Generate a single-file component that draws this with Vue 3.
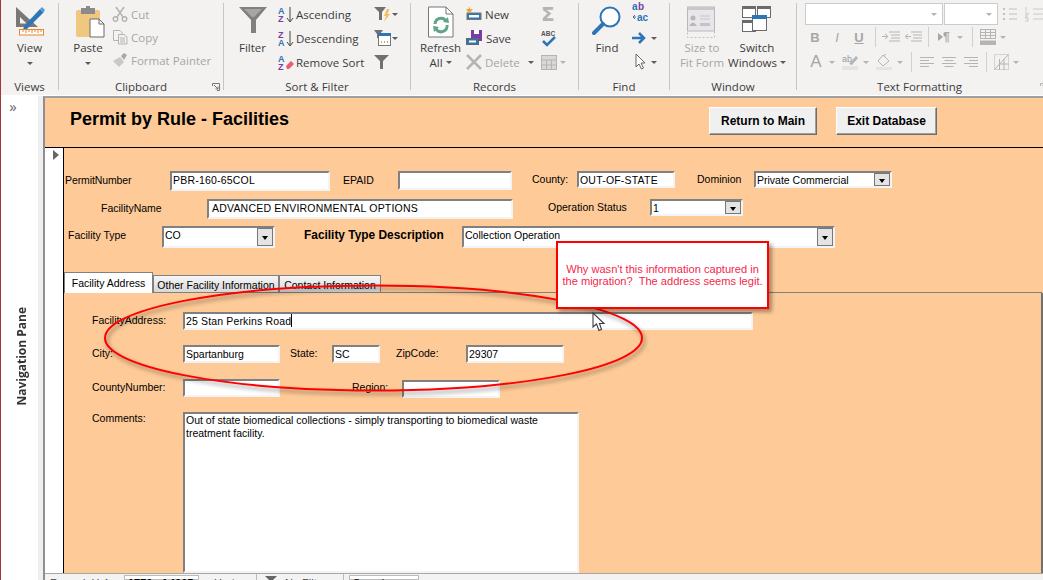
<template>
  <div class="app">
    <!-- ribbon -->
    <div class="ribbon">
      <div class="group g-views">
        <div class="group-body">
          <div class="big">
            <svg class="big-icon" width="32" height="32" viewBox="0 0 32 32">
              <path d="M2 1 L2 21 L24 21 Z" fill="#787878" />
              <path d="M6 11 L6 17.500 L12.500 17.500 Z" fill="#f3f2f1" />
              <path d="M10 20 L26 3 L29.500 6.500 L13 23 L9 24 Z" fill="#2e75b6" />
              <path d="M26 3 L28 1 L31 4 L29.500 6.500 Z" fill="#5b9bd5" />
              <rect x="5.500" y="23.500" width="24" height="5.500" fill="#fff" stroke="#e8862a" />
              <path d="M9 24v2M12 24v3M15 24v2M18 24v3M21 24v2M24 24v3M27 24v2" stroke="#e8862a" />
            </svg>
            <span>View</span>
            <i class="caret" />
          </div>
        </div>
        <div class="group-label">Views</div>
      </div>

      <div class="group g-clip">
        <div class="group-body">
          <div class="big paste">
            <svg class="big-icon" width="30" height="32" viewBox="0 0 30 32">
              <rect x="1" y="4" width="24" height="27" rx="2" fill="#f0c77e" />
              <rect x="6" y="2" width="14" height="6" fill="#8a8a8a" />
              <rect x="11" y="0" width="4" height="4" fill="#8a8a8a" />
              <path d="M15 13 H24 L29 18 V31 H15 Z" fill="#fff" stroke="#6b6b6b" />
              <path d="M24 13 V18 H29" fill="none" stroke="#6b6b6b" />
            </svg>
            <span>Paste</span>
            <i class="caret" />
          </div>
          <div class="small-col col-clip">
            <div class="small off">
              <svg width="16" height="16" viewBox="0 0 16 16" fill="none" stroke="#b4b4b4" stroke-width="1.500"><path d="M4 1 L11 11M12 1 L5 11" /><circle cx="3.500" cy="13" r="2.300" /><circle cx="12.500" cy="13" r="2.300" /></svg>
              <span>Cut</span>
            </div>
            <div class="small off">
              <svg width="16" height="16" viewBox="0 0 16 16" fill="#f3f2f1" stroke="#b4b4b4"><path d="M1.500 1.500 H8 L10 3.500 V11.500 H1.500 Z" /><path d="M6.500 5.500 H12 L15 8 V15 H6.500 Z" /><path d="M8 9h5M8 11h5M8 13h5" /></svg>
              <span>Copy</span>
            </div>
            <div class="small off">
              <svg width="16" height="16" viewBox="0 0 16 16"><path d="M1 9 L8 5 L12 10 L7 15 Z" fill="#c8c8c8" /><path d="M9 4 L12 1 L15 3 L12 8 Z" fill="#a8a8a8" /></svg>
              <span>Format Painter</span>
            </div>
          </div>
        </div>
        <div class="group-label">Clipboard</div>
        <svg class="launcher" width="8" height="8" viewBox="0 0 8 8" fill="none" stroke="#777"><path d="M.5 3V.5H7.500V7.500H5" /><path d="M2 2 L6 6M6 3.500V6H3.500" /></svg>
      </div>

      <div class="group g-sort">
        <div class="group-body">
          <div class="big filter">
            <svg class="big-icon" width="30" height="32" viewBox="0 0 30 32">
              <path d="M1 1 H29 L18 14 V27 H13 V14 Z" fill="#808080" />
              <path d="M6 3 H24 L16 11 H14 Z" fill="#a6a6a6" />
            </svg>
            <span>Filter</span>
          </div>
          <div class="small-col col-sort">
            <div class="small">
              <svg width="16" height="17" viewBox="0 0 16 17">
                <text x="0" y="7.500" class="az blue">A</text><text x="0" y="16" class="az violet">Z</text>
                <path d="M12 1 V15 M9 12 L12 16 L15 12" fill="none" stroke="#444" />
              </svg>
              <span>Ascending</span>
            </div>
            <div class="small">
              <svg width="16" height="17" viewBox="0 0 16 17">
                <text x="0" y="7.500" class="az violet">Z</text><text x="0" y="16" class="az blue">A</text>
                <path d="M12 1 V15 M9 12 L12 16 L15 12" fill="none" stroke="#444" />
              </svg>
              <span>Descending</span>
            </div>
            <div class="small">
              <svg width="16" height="17" viewBox="0 0 16 17">
                <text x="0" y="7.500" class="az blue">A</text><text x="0" y="16" class="az violet">Z</text>
                <path d="M8 12 L13 7 L16 10 L11 15 H9 Z" fill="#e85d75" />
              </svg>
              <span>Remove Sort</span>
            </div>
          </div>
          <div class="small-col col-filter">
            <div class="icon-row">
              <svg width="18" height="16" viewBox="0 0 18 16"><path d="M0 1 H12 L8 6 V14 H5 V6 Z" fill="#707070" /><path d="M13 3 L10 10 H12 L10 16 L16 8 H13.500 L15.500 3 Z" fill="#f0c060" /></svg>
              <i class="caret" />
            </div>
            <div class="icon-row">
              <svg width="18" height="18" viewBox="0 0 18 18"><path d="M0 1 H9 L6 5 V9 H3 V5 Z" fill="#707070" /><rect x="4.500" y="4.500" width="12" height="12" fill="#fff" stroke="#777" /><rect x="4" y="4" width="13" height="3" fill="#2e75b6" /><path d="M7 13h1M10 13h1M13 13h1" stroke="#555" /></svg>
              <i class="caret" />
            </div>
            <div class="icon-row">
              <svg width="15" height="14" viewBox="0 0 15 14"><path d="M0 0 H15 L9 6 V14 H6 V6 Z" fill="#707070" /></svg>
            </div>
          </div>
        </div>
        <div class="group-label">Sort &amp; Filter</div>
      </div>

      <div class="group g-rec">
        <div class="group-body">
          <div class="big refresh">
            <svg class="big-icon" width="26" height="32" viewBox="0 0 26 32">
              <path d="M.5 1 H18 L25 8 V31 H.5 Z" fill="#fff" stroke="#777" />
              <path d="M18 1 V8 H25" fill="none" stroke="#777" />
              <path d="M7 18 A6 6 0 0 1 18 15" fill="none" stroke="#5fa58a" stroke-width="3" />
              <path d="M19 19 A6 6 0 0 1 8 23" fill="none" stroke="#5fa58a" stroke-width="3" />
              <path d="M15 16 L21 17 L20 11 Z M11 21 L5 20 L6 26 Z" fill="#5fa58a" />
            </svg>
            <span>Refresh</span>
            <span>All<i class="caret inline" /></span>
          </div>
          <div class="small-col col-rec">
            <div class="small">
              <svg width="16" height="16" viewBox="0 0 16 16"><rect x="1" y="7" width="14" height="6.500" fill="#2e75b6" stroke="#777" /><rect x="3" y="9" width="10" height="2.500" fill="#fff" /><path d="M3 0 L4 3 L7 3 L5 5 L6 7 L3 6 L1 7 L1.500 5 L0 3 L2.500 3 Z" fill="#eaa83a" /></svg>
              <span>New</span>
            </div>
            <div class="small">
              <svg width="17" height="16" viewBox="0 0 17 16"><rect x="5" y="0" width="11" height="11" fill="#7a3ea0" /><rect x="8" y="0" width="5" height="4" fill="#fff" /><rect x=".5" y="8.500" width="12" height="6" fill="#2e75b6" stroke="#666" /><rect x="3" y="10.500" width="7" height="2" fill="#fff" /></svg>
              <span>Save</span>
            </div>
            <div class="small off">
              <svg width="16" height="16" viewBox="0 0 16 16" stroke="#b4b4b4" stroke-width="2.500"><path d="M1 1 L15 15M15 1 L1 15" /></svg>
              <span>Delete</span>
              <i class="caret del" />
            </div>
          </div>
          <div class="small-col col-rec2">
            <div class="icon-row">
              <span class="sigma">Σ</span>
            </div>
            <div class="icon-row">
              <svg width="16" height="18" viewBox="0 0 16 18"><text x="0" y="6.500" class="abc">ABC</text><path d="M2 12 L6 16 L14 8" fill="none" stroke="#2e75b6" stroke-width="2.500" /></svg>
            </div>
            <div class="icon-row gap3">
              <svg width="16" height="15" viewBox="0 0 16 15" fill="#d8d8d8" stroke="#b4b4b4"><rect x=".5" y=".5" width="15" height="14" /><path d="M.5 5h15M.5 10h15M5.500 5v10M10.500 5v10" /></svg>
              <i class="caret pale" />
            </div>
          </div>
        </div>
        <div class="group-label">Records</div>
      </div>

      <div class="group g-find">
        <div class="group-body">
          <div class="big find">
            <svg class="big-icon" width="30" height="32" viewBox="0 0 30 32">
              <circle cx="18" cy="11" r="9.500" fill="#fff" stroke="#2e75b6" stroke-width="2" />
              <path d="M11 18 L2 27" stroke="#2e75b6" stroke-width="4" stroke-linecap="round" />
            </svg>
            <span>Find</span>
          </div>
          <div class="small-col col-find">
            <div class="icon-row spread">
              <svg class="find-ab" width="18" height="23" viewBox="0 0 18 23"><text x="0" y="10" class="ab-a">a</text><text x="6" y="10" class="ab-b">b</text><text x="5" y="21" class="ab-c">ac</text><path d="M1 17 H4 M1 17 L3 15 M1 17 L3 19" fill="none" stroke="#2e75b6" /></svg>
            </div>
            <div class="icon-row spread">
              <svg width="14" height="12" viewBox="0 0 14 12"><path d="M0 6 H11 M7 1 L12 6 L7 11" fill="none" stroke="#2e75b6" stroke-width="2.500" /></svg>
              <i class="caret" />
            </div>
            <div class="icon-row spread">
              <svg class="find-ptr" width="14" height="18" viewBox="0 0 14 18"><path d="M2 1 V14 L5 11 L7.500 16 L9.500 15 L7 10 H11 Z" fill="#fff" stroke="#666" /></svg>
              <i class="caret" />
            </div>
          </div>
        </div>
        <div class="group-label">Find</div>
      </div>

      <div class="group g-win">
        <div class="group-body">
          <div class="big size off">
            <svg class="big-icon" width="30" height="32" viewBox="0 0 30 32">
              <rect x=".5" y="20.500" width="27" height="11" fill="none" stroke="#c0bcc8" stroke-dasharray="2 2" />
              <rect x=".5" y="1" width="27" height="24" fill="#e8e6ea" stroke="#b8b8b8" />
              <rect x=".5" y="1" width="27" height="3" fill="#c8c8c8" />
              <circle cx="6" cy="12" r="2.500" fill="#b8b8b8" />
              <path d="M2 20 Q6 13 10 20 Z" fill="#b8b8b8" />
              <path d="M13 10h10M13 13h10" stroke="#c4c4c4" />
              <rect x="13" y="17" width="10" height="3" fill="#c4c4c4" />
            </svg>
            <span>Size to</span>
            <span>Fit Form</span>
          </div>
          <div class="big switch">
            <svg class="big-icon" width="30" height="32" viewBox="0 0 30 32">
              <g fill="#fff" stroke="#6b6b6b">
                <rect x=".5" y=".5" width="13" height="11" />
                <rect x="15.500" y=".5" width="13" height="11" />
                <rect x=".5" y="14.500" width="13" height="11" />
              </g>
              <g fill="#6b6b6b">
                <rect x="0" y="0" width="14" height="3" />
                <rect x="15" y="0" width="14" height="3" />
                <rect x="0" y="14" width="14" height="3" />
              </g>
              <rect x="10.500" y="9.500" width="14" height="15" fill="#fff" stroke="#6b6b6b" />
              <rect x="10" y="9" width="15" height="4" fill="#2e75b6" />
            </svg>
            <span>Switch</span>
            <span>Windows<i class="caret inline" /></span>
          </div>
        </div>
        <div class="group-label">Window</div>
      </div>

      <div class="group g-text">
        <div class="group-body text-body">
          <div class="fmt-row fmt-top">
            <div class="font-box font-name"><i class="caret pale" /></div>
            <div class="font-box font-size"><i class="caret pale" /></div>
            <svg width="14" height="16" viewBox="0 0 14 16" stroke="#c0c0c0"><path d="M6 3h8M6 8h8M6 13h8" /><path d="M0 3h3M0 8h3M0 13h3" stroke-width="2" stroke-dasharray="2 1" /></svg>
            <svg class="num-list" width="18" height="16" viewBox="0 0 18 16" stroke="#c0c0c0"><path d="M8 3h10M8 8h10M8 13h10M1 1v4M0 7h3v2h-3v2h3M0 12h3v3h-3" fill="none" stroke-width=".8" /></svg>
          </div>
          <div class="fmt-row fmt-two">
            <span class="fmt b">B</span>
            <span class="fmt i">I</span>
            <span class="fmt u">U</span>
            <i class="vsep s1" />
            <svg class="in-a" width="18" height="12" viewBox="0 0 18 12" stroke="#b4b4b4"><path d="M7 1h11M9 4h9M9 7h9M7 10h11" /><path d="M0 5.500h5M3 3l3 2.500-3 2.500" fill="none" /></svg>
            <svg class="in-b" width="17" height="12" viewBox="0 0 17 12" stroke="#b4b4b4"><path d="M6 1h11M8 4h9M8 7h9M6 10h11" /><path d="M6 5.500H1M3 3L0 5.500 3 8" fill="none" /></svg>
            <i class="vsep s2" />
            <span class="pilcrow"><i class="tri" />¶</span>
            <i class="caret pale c1" />
            <i class="vsep s3" />
            <svg width="16" height="16" viewBox="0 0 16 16" fill="none" stroke="#b4b4b4"><rect x=".5" y=".5" width="15" height="9" /><path d="M.5 3.500h15M.5 6.500h15M5.500 .5v9M10.500 .5v9" /><rect x="0" y="12" width="16" height="4" fill="#b4b4b4" /></svg>
            <i class="caret pale c2" />
          </div>
          <div class="fmt-row fmt-three">
            <span class="fmt big-a">A</span>
            <i class="caret pale c3" />
            <svg class="hl" width="17" height="16" viewBox="0 0 17 16"><text x="0" y="8" class="abh">ab</text><path d="M7 10 L14 2 L16 4 L10 11 Z" fill="#b4b4b4" /><rect x="0" y="12" width="16" height="4" fill="#e4e4e4" /></svg>
            <i class="caret pale c4" />
            <svg class="fill" width="16" height="16" viewBox="0 0 16 16"><path d="M7 1 L13 7 L7 12 L2 7 Z" fill="none" stroke="#b4b4b4" /><path d="M7 2 L10 0" stroke="#b4b4b4" /><rect x="0" y="13" width="16" height="3" fill="#e4e4e4" /></svg>
            <i class="caret pale c5" />
            <i class="vsep s4" />
            <svg class="al" width="14" height="11" viewBox="0 0 14 11" stroke="#b4b4b4"><path d="M0 .5h14M0 3.500h9M0 6.500h14M0 9.500h9" /></svg>
            <svg class="al" width="14" height="11" viewBox="0 0 14 11" stroke="#b4b4b4"><path d="M0 .5h14M2.500 3.500h9M0 6.500h14M2.500 9.500h9" /></svg>
            <svg class="al" width="14" height="11" viewBox="0 0 14 11" stroke="#b4b4b4"><path d="M0 .5h14M5 3.500h9M0 6.500h14M5 9.500h9" /></svg>
            <i class="vsep s5" />
            <svg width="15" height="16" viewBox="0 0 15 16" fill="none" stroke="#b4b4b4"><rect x=".5" y=".5" width="14" height="15" stroke-dasharray="1 1" /><path d="M.5 15.500 L14.500 .5M5.500 5v11M10 5v11M5 10h10" /></svg>
            <i class="caret pale c6" />
          </div>
        </div>
        <div class="group-label">Text Formatting</div>
        <svg class="launcher" width="8" height="8" viewBox="0 0 8 8" fill="none" stroke="#b4b4b4"><path d="M.5 3V.5H7.500V7.500H5" /><path d="M2 2 L6 6M6 3.500V6H3.500" /></svg>
      </div>
    </div>

    <!-- work area -->
    <div class="work">
      <div class="nav-pane">
        <span class="chev">»</span>
        <span class="nav-title">Navigation Pane</span>
      </div>

      <div class="form-wrap">
        <div class="form-head">
          <h1>Permit by Rule - Facilities</h1>
          <button class="cmd cmd-main">Return to Main</button>
          <button class="cmd cmd-exit">Exit Database</button>
        </div>

        <div class="form-main">
          <div class="selector"><i class="sel-arrow" /></div>
          <div class="detail">
            <div class="row r1">
              <label class="low w-permit">PermitNumber</label>
              <div class="box caps b-permit">PBR-160-65COL</div>
              <label class="low w-epaid">EPAID</label>
              <div class="box b-epaid"></div>
              <label class="w-county">County:</label>
              <div class="box caps b-county">OUT-OF-STATE</div>
              <label class="w-dom">Dominion</label>
              <div class="box combo b-dom">Private Commercial<i class="drop"><b /></i></div>
            </div>
            <div class="row r2">
              <label class="low w-fname">FacilityName</label>
              <div class="box caps b-fname">ADVANCED ENVIRONMENTAL OPTIONS</div>
              <label class="w-op">Operation Status</label>
              <div class="box combo b-op">1<i class="drop"><b /></i></div>
            </div>
            <div class="row r3">
              <label class="low w-type">Facility Type</label>
              <div class="box combo b-type">CO<i class="drop"><b /></i></div>
              <label class="low w-desc">Facility Type Description</label>
              <div class="box combo b-desc">Collection Operation<i class="drop"><b /></i></div>
            </div>

            <div class="tabs">
              <div class="tab on">Facility Address</div>
              <div class="tab t2">Other Facility Information</div>
              <div class="tab t3">Contact Information</div>
              <div class="tab-fill"></div>
            </div>
            <div class="panel">
              <div class="row p1">
                <label class="w-p">FacilityAddress:</label>
                <div class="box b-addr">25 Stan Perkins Road<i class="text-caret" /></div>
              </div>
              <div class="row p2">
                <label class="w-p">City:</label>
                <div class="box b-city">Spartanburg</div>
                <label class="w-state">State:</label>
                <div class="box b-state">SC</div>
                <label class="w-zip">ZipCode:</label>
                <div class="box b-zip">29307</div>
              </div>
              <div class="row p3">
                <label class="w-p">CountyNumber:</label>
                <div class="box b-city"></div>
                <label class="w-region">Region:</label>
                <div class="box b-region"></div>
              </div>
              <div class="row p4">
                <label class="w-p">Comments:</label>
                <div class="box b-comments">Out of state biomedical collections - simply transporting to biomedical waste treatment facility.</div>
              </div>
            </div>
          </div>
        </div>

        <div class="status">
          <span class="st-rec">Record: H 4</span>
          <span class="st-num">1770 of 4905</span>
          <span class="st-nav">▸ H ▸*</span>
          <i class="st-sep" />
          <svg class="st-fun" width="12" height="8" viewBox="0 0 12 8"><path d="M0 0 H12 L8 4 V8 H4 V4 Z" fill="#666" /></svg>
          <span class="st-filter">No Filter</span>
          <i class="st-sep" />
          <span class="st-search">Search</span>
        </div>
      </div>
    </div>

    <!-- markup drawn over the screen -->
    <svg class="ring" width="1043" height="580" viewBox="0 0 1043 580">
      <ellipse cx="373.500" cy="338" rx="268.500" ry="52.500" fill="none" stroke="#f00" stroke-width="2" />
    </svg>
    <div class="note">
      Why wasn't this information captured in<br>the migration?&nbsp; The address seems legit.
    </div>
    <svg class="pointer" width="14" height="21" viewBox="0 0 14 21">
      <path d="M1 1 V15 L4.500 12 L7 18.500 L9.500 17.500 L7.500 11.500 H12 Z" fill="#fff" stroke="#3c3c46" stroke-width="1.100" />
    </svg>
  </div>
</template>

<script setup>
</script>

<style>
html, body { margin: 0; overflow: hidden; background: #fff; }
</style>

<style scoped>
.app {
  position: relative;
  width: 1043px;
  height: 580px;
  overflow: hidden;
  display: flex;
  flex-direction: column;
  box-sizing: border-box;
  border-left: 1px solid #a4373a;
  font-family: "Liberation Sans", Arial, sans-serif;
  background: #fff;
}

/* ribbon */
.ribbon {
  display: flex;
  flex: none;
  height: 95px;
  background: #f3f2f1;
  font-family: "Open Sans", sans-serif;
  font-size: 11.5px;
  color: #3c3c3c;
}
.group {
  position: relative;
  flex: none;
  height: 95px;
  display: flex;
  flex-direction: column;
}
.group::after {
  content: "";
  position: absolute;
  right: 0;
  top: 3px;
  bottom: 5px;
  width: 1px;
  background: #c6c6c6;
}
.g-views { width: 58px; }
.g-clip { width: 165px; }
.g-sort { width: 187px; }
.g-rec { width: 168px; }
.g-find { width: 91px; }
.g-win { width: 127px; }
.g-text { width: 246px; }
.g-text::after { display: none; }
.group-body {
  display: flex;
  height: 80px;
  flex: none;
}
.group-label {
  text-align: center;
  line-height: 14px;
  margin-right: 1px;
}
.launcher {
  position: absolute;
  right: 4px;
  bottom: 4px;
}
.g-text .launcher { right: -5px; }
.big {
  flex: none;
  display: flex;
  flex-direction: column;
  align-items: center;
  line-height: 15px;
  padding-top: 6px;
}
.big-icon { margin-bottom: 2px; flex: none; height: 32px; }
.g-views .big { width: 57px; }
.caret {
  display: block;
  width: 0;
  height: 0;
  margin-top: 7px;
  border-left: 3px solid transparent;
  border-right: 3px solid transparent;
  border-top: 3px solid #5c5c5c;
}
.caret.inline {
  display: inline-block;
  margin: 0 0 2px 3px;
  vertical-align: middle;
}
.caret.pale { border-top-color: #b4b4b4; }
.paste { width: 58px; }
.paste .big-icon { margin-left: 3px; }
.small-col {
  display: flex;
  flex-direction: column;
  flex: none;
  padding-top: 5px;
  gap: 6px;
}
.col-clip { margin-left: -5px; gap: 5px; }
.small {
  display: flex;
  align-items: center;
  gap: 3px;
  height: 18px;
  white-space: nowrap;
}
.small svg { flex: none; }
.off, .off span { color: #a6a6a6; }
.filter { width: 51px; margin-left: 3px; }
.col-sort { width: 96px; }
.col-sort .small { gap: 2px; }
.icon-row {
  display: flex;
  align-items: center;
  height: 18px;
}
.icon-row .caret { margin-top: 0; }
.gap3 { gap: 3px; }
.spread { width: 25px; justify-content: space-between; }
.find-ptr { margin-left: 2px; }
.find-ab { margin-top: -6px; flex: none; }
.az { font: bold 9px "Liberation Sans", sans-serif; }
.blue { fill: #2e75b6; }
.violet { fill: #7a3ea0; }
.refresh { width: 55px; margin-left: 2px; }
.col-rec { width: 75px; margin-left: -2px; }
.caret.del { margin: 0 0 0 5px; }
.sigma {
  color: #b4b4b4;
  font: bold 20px/18px "DejaVu Sans", sans-serif;
}
.abc { font: bold 6.500px "Liberation Sans", sans-serif; fill: #555; }
.find { width: 56px; }
.col-find { margin-left: -3px; }
.ab-a { font: bold 10px "Liberation Sans", sans-serif; fill: #2e75b6; }
.ab-b { font: bold 10px "Liberation Sans", sans-serif; fill: #7a3ea0; }
.ab-c { font: bold 10px "Liberation Sans", sans-serif; fill: #2e75b6; }
.abh { font: 9px "Liberation Sans", sans-serif; fill: #9a9a9a; }
.size { width: 64px; }
.size span { color: #a6a6a6; }
.switch { width: 62px; margin-left: -8px; }

.text-body {
  flex-direction: column;
  box-sizing: border-box;
  padding: 3px 0 0 8px;
}
.fmt-row {
  display: flex;
  align-items: center;
  flex: none;
}
.fmt-top { height: 22px; }
.fmt-two { height: 24px; }
.fmt-three { height: 24px; margin-top: 1px; }
.font-box {
  box-sizing: border-box;
  height: 22px;
  background: #fff;
  border: 1px solid #cbcbcb;
  display: flex;
  align-items: center;
  justify-content: flex-end;
  padding-right: 5px;
  flex: none;
}
.font-box .caret { margin: 0; }
.font-name { width: 138px; margin-right: 1px; }
.font-size { width: 54px; margin-right: 5px; }
.num-list { margin-left: 8px; }
.fmt { color: #a6a6a6; font-family: "Liberation Sans", sans-serif; width: 22px; text-align: center; flex: none; }
.b { font-weight: 700; font-size: 13px; margin-left: -1px; }
.i { font-style: italic; font-size: 13px; }
.u { text-decoration: underline; font-weight: 700; font-size: 13px; }
.vsep {
  flex: none;
  width: 1px;
  height: 20px;
  background: #d0d0d0;
}
.s1 { margin-left: 5px; }
.in-a { margin-left: 6px; }
.in-b { margin-left: 5px; }
.s2 { margin-left: 6px; }
.pilcrow {
  color: #a6a6a6;
  font: bold 12px "Liberation Sans", sans-serif;
  margin-left: 9px;
  display: flex;
  align-items: center;
}
.tri {
  border-left: 5px solid #a6a6a6;
  border-top: 4px solid transparent;
  border-bottom: 4px solid transparent;
}
.fmt-row .caret { margin: 0; flex: none; }
.fmt-row .c1 { margin-left: 7px; }
.s3 { margin: 0 7px 0 9px; }
.fmt-row .c2 { margin-left: 4px; }
.big-a { font-size: 17px; width: 16px; margin-left: 3px; }
.fmt-row .c3 { margin-left: 5px; }
.hl { margin-left: 7px; }
.fmt-row .c4 { margin-left: 4px; }
.fill { margin-left: 7px; }
.fmt-row .c5 { margin-left: 5px; }
.s4 { margin-left: 8px; }
.al { margin-left: 8px; }
.s5 { margin: 0 7px 0 8px; }
.fmt-row .c6 { margin-left: 4px; }

/* work area */
.work {
  flex: 1;
  display: flex;
  min-height: 0;
}
.nav-pane {
  flex: none;
  width: 37px;
  margin-top: 1px;
  box-sizing: content-box;
  background: #fff;
  border-right: 5px solid #eeeff1;
  display: flex;
  flex-direction: column;
  align-items: center;
  font-family: "Open Sans", sans-serif;
}
.chev {
  color: #666;
  font-size: 15px;
  line-height: 18px;
  margin: 1px 13px 0 0;
}
.nav-title {
  writing-mode: vertical-rl;
  transform: rotate(180deg);
  font-size: 12px;
  font-weight: 700;
  color: #333;
  margin: 192px 0 0 3px;
  white-space: nowrap;
}
.form-wrap {
  flex: 1;
  min-width: 0;
  display: flex;
  flex-direction: column;
  border-left: 2px solid #8f8f8f;
  border-top: 2px solid #a0a0a0;
  margin-top: 1px;
  box-sizing: border-box;
}
.form-head {
  flex: none;
  display: flex;
  align-items: flex-start;
  height: 50px;
  box-sizing: border-box;
  background: #fecb98;
  border-bottom: 1px solid #000;
}
.form-head h1 {
  flex: none;
  width: 639px;
  margin: 10px 0 0 25px;
  font-size: 18px;
  line-height: 22px;
  color: #000;
}
.cmd {
  flex: none;
  box-sizing: border-box;
  margin-top: 9px;
  height: 28px;
  padding: 0;
  background: #f0f0f0;
  border: 1px solid;
  border-color: #fff #6e6e6e #6e6e6e #fff;
  box-shadow: inset -1px -1px 0 #a0a0a0;
  font: bold 12px "Liberation Sans", sans-serif;
  color: #000;
}
.cmd-main { width: 108px; margin-right: 19px; }
.cmd-exit { width: 101px; }

.form-main {
  flex: 1;
  min-height: 0;
  display: flex;
}
.selector {
  flex: none;
  box-sizing: content-box;
  width: 10px;
  background: #fff;
  border-right: 1px solid #000;
  padding: 2px 0 0 8px;
}
.sel-arrow {
  display: block;
  width: 0;
  border-left: 6px solid #666;
  border-top: 5.500px solid transparent;
  border-bottom: 5.500px solid transparent;
}
.detail {
  flex: 1;
  min-width: 0;
  background: #fecb98;
  display: flex;
  flex-direction: column;
  font-size: 10.500px;
  color: #000;
}
.row {
  display: flex;
  align-items: flex-start;
  flex: none;
}
.row label {
  flex: none;
  line-height: 16px;
  white-space: nowrap;
}
.row .low { line-height: 18px; }
.box {
  flex: none;
  position: relative;
  box-sizing: border-box;
  background: #fff;
  border: 2px solid;
  border-color: #808080 #f4f4f4 #f4f4f4 #808080;
  padding: 0 1px;
  line-height: 14px;
  white-space: nowrap;
  overflow: hidden;
}
.caps { letter-spacing: 0.2px; }
.combo { display: block; }
.drop {
  position: absolute;
  top: 0;
  right: 0;
  bottom: 0;
  width: 16px;
  box-sizing: border-box;
  border: 1px solid #777;
  background: #e4e4e4;
  display: flex;
  align-items: center;
  justify-content: center;
}
.drop b {
  width: 0;
  border-left: 3.500px solid transparent;
  border-right: 3.500px solid transparent;
  border-top: 4px solid #000;
  margin-top: 2px;
}
.r1 { margin-top: 23px; height: 20px; }
.r2 { margin-top: 8px; height: 21px; }
.r3 { margin-top: 6px; height: 22px; }
.w-permit { width: 105px; margin-left: 1px; letter-spacing: -0.1px; }
.b-permit { width: 160px; height: 20px; }
.w-epaid { width: 55px; margin-left: 13px; }
.b-epaid { width: 114px; height: 19px; }
.w-county { width: 45px; margin-left: 20px; }
.b-county { width: 98px; height: 17px; }
.w-dom { width: 57px; margin-left: 22px; }
.b-dom { width: 138px; height: 17px; }
.w-fname { width: 106px; margin-left: 37px; }
.b-fname { width: 306px; height: 20px; padding-left: 3px; }
.w-op { width: 102px; margin-left: 35px; }
.b-op { width: 93px; height: 17px; }
.w-type { width: 94px; margin-left: 4px; }
.b-type { width: 113px; height: 22px; }
.w-desc { width: 158px; margin-left: 29px; font-weight: 700; font-size: 11.900px; }
.b-desc { width: 373px; height: 22px; }

.tabs {
  flex: none;
  display: flex;
  align-items: flex-end;
  height: 21px;
  margin-top: 24px;
  margin-right: 1px;
}
.tab {
  flex: none;
  box-sizing: border-box;
  height: 18px;
  border: 1px solid #808080;
  background: linear-gradient(#f6f6f6, #d8d8d8);
  text-align: center;
  line-height: 18px;
  white-space: nowrap;
}
.tab.on {
  width: 89px;
  height: 21px;
  background: #fff;
  border-bottom: none;
  line-height: 20px;
}
.t2 { width: 126px; }
.t3 { width: 102px; }
.tab-fill {
  flex: 1;
  border-bottom: 1px solid #808080;
}
.panel {
  flex: 1;
  min-height: 0;
  overflow: hidden;
  border-right: 2px solid #707070;
  display: flex;
  flex-direction: column;
}
.panel .row label { line-height: 17px; }
.w-p { width: 91px; margin-left: 28px; }
.p1 { margin-top: 19px; }
.p2 { margin-top: 15px; }
.p3 { margin-top: 16px; }
.p4 { margin-top: 14px; }
.panel .p4 label { line-height: 13px; }
.b-addr { width: 570px; height: 18px; letter-spacing: 0.15px; }
.b-city { width: 97px; height: 18px; }
.w-state { width: 42px; margin-left: 10px; }
.b-state { width: 48px; height: 18px; }
.w-zip { width: 70px; margin-left: 16px; }
.b-zip { width: 98px; height: 18px; }
.w-region { width: 50px; margin-left: 72px; }
.b-region { width: 98px; height: 18px; margin-top: 1px; }
.b-comments {
  width: 396px;
  height: 161px;
  white-space: normal;
  line-height: 13px;
}
.text-caret {
  display: inline-block;
  width: 1px;
  height: 13px;
  background: #000;
  vertical-align: top;
}

.status {
  flex: none;
  height: 7px;
  box-sizing: border-box;
  border-top: 1px solid #a8a8a8;
  background: #f3f3f4;
  overflow: hidden;
  display: flex;
  font-size: 11px;
  line-height: 12px;
  color: #444;
  padding: 1px 0 0 5px;
}
.st-rec { width: 74px; flex: none; padding-top: 2px; }
.st-num {
  flex: none;
  width: 75px;
  box-sizing: border-box;
  background: #fff;
  border: 1px solid #bbb;
  font-weight: 700;
  color: #000;
  padding: 1px 0 0 3px;
}
.st-nav { flex: none; width: 57px; padding: 2px 0 0 6px; box-sizing: border-box; }
.st-sep { flex: none; width: 1px; background: #bbb; margin-top: -1px; }
.st-fun { flex: none; margin: 1px 0 0 8px; }
.st-filter { flex: none; width: 66px; padding: 2px 0 0 8px; box-sizing: border-box; }
.st-search {
  flex: none;
  width: 70px;
  margin-left: 5px;
  box-sizing: border-box;
  background: #fff;
  border: 1px solid #bbb;
  color: #000;
  padding: 1px 0 0 3px;
}

/* markup */
.ring {
  position: absolute;
  left: -1px;
  top: 0;
  pointer-events: none;
  filter: drop-shadow(2px 3px 2px rgba(0, 0, 0, 0.45));
}
.note {
  position: absolute;
  left: 555px;
  top: 241px;
  width: 213px;
  height: 68px;
  box-sizing: border-box;
  background: #fff;
  border: 2px solid #f00;
  box-shadow: 3px 3px 4px rgba(0, 0, 0, 0.35);
  color: #f5284c;
  font-size: 11.100px;
  line-height: 12px;
  text-align: center;
  padding-top: 20px;
  white-space: nowrap;
}
.pointer {
  position: absolute;
  left: 591px;
  top: 312px;
}
</style>
